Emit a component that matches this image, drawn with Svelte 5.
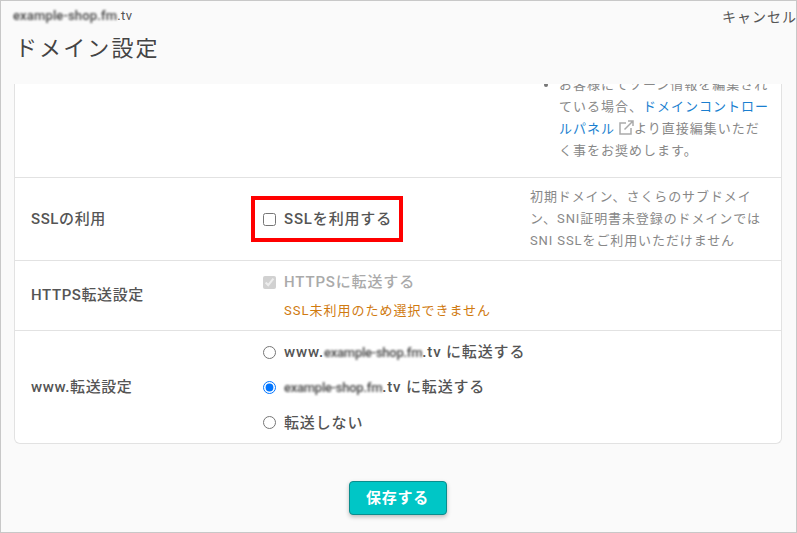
<script>
  let redirect = $state('bare');
  let useSsl = $state(false);
</script>

<div class="modal">
  <header class="modal-header">
    <div class="top-line">
      <span class="domain"><span class="masked">example-shop.fm</span>.tv</span>
      <button class="cancel">キャンセル</button>
    </div>
    <h1>ドメイン設定</h1>
  </header>

  <div class="content">
    <div class="card">
      <div class="row clipped">
        <ul class="note">
          <li>
            お客様にてゾーン情報を編集されている場合、<a href="#top">ドメインコントロールパネル</a><svg class="ext" viewBox="0 0 16 16" width="16" height="16" fill="none" stroke="#aaa" stroke-width="1.5"><path d="M8 3H2v11h11V8" /><path d="M6.5 9.5 14.5 1.5M10 1h5v5" /></svg>より直接編集いただく事をお奨めします。
          </li>
        </ul>
      </div>

      <div class="row ssl">
        <div class="label">SSLの利用</div>
        <div class="control">
          <label class="option highlight">
            <input type="checkbox" bind:checked={useSsl} />
            <span>SSLを利用する</span>
          </label>
        </div>
        <div class="side-note">初期ドメイン、さくらのサブドメイン、SNI証明書未登録のドメインではSNI SSLをご利用いただけません</div>
      </div>

      <div class="row https">
        <div class="label">HTTPS転送設定</div>
        <div class="control stack">
          <label class="option disabled">
            <input type="checkbox" checked disabled />
            <span>HTTPSに転送する</span>
          </label>
          <p class="warn">SSL未利用のため選択できません</p>
        </div>
      </div>

      <div class="row www">
        <div class="label">www.転送設定</div>
        <div class="control radios">
          <label class="option">
            <input type="radio" name="redirect" value="www" bind:group={redirect} />
            <span>www.<span class="masked">example-shop.fm</span>.tv に転送する</span>
          </label>
          <label class="option">
            <input type="radio" name="redirect" value="bare" bind:group={redirect} />
            <span><span class="masked">example-shop.fm</span>.tv に転送する</span>
          </label>
          <label class="option">
            <input type="radio" name="redirect" value="none" bind:group={redirect} />
            <span>転送しない</span>
          </label>
        </div>
      </div>
    </div>

    <div class="actions">
      <button class="save">保存する</button>
    </div>
  </div>
</div>

<style>
  :global(body) {
    margin: 0;
    background: #fafafa;
  }

  .modal {
    box-sizing: border-box;
    width: 797px;
    height: 533px;
    display: flex;
    flex-direction: column;
    overflow: hidden;
    border: 1px solid #c8c8c8;
    background: #fafafa;
    color: #444;
    font-family: Roboto, "Noto Sans CJK JP", sans-serif;
  }

  .modal-header {
    height: 83px;
    flex: none;
    box-sizing: border-box;
    padding: 6px 0 0 12px;
  }

  .top-line {
    display: flex;
    justify-content: space-between;
    align-items: center;
    height: 18px;
  }

  .domain {
    margin-bottom: 2px;
    font-size: 13px;
    color: #555;
    letter-spacing: 0.4px;
  }

  .masked {
    filter: blur(0.8px);
    display: inline-block;
    letter-spacing: 0.15px;
    font-size: 13px;
    font-weight: 500;
    color: #444;
  }

  .cancel {
    width: 74px;
    flex: none;
    padding: 0;
    border: 0;
    background: none;
    color: #555;
    font: inherit;
    font-size: 14px;
    letter-spacing: 1px;
    text-align: left;
    white-space: nowrap;
    overflow: hidden;
  }

  h1 {
    margin: 8px 0 0 2px;
    font-size: 22px;
    font-weight: 400;
    line-height: 32px;
    letter-spacing: 2.1px;
    color: #444;
  }

  .content {
    flex: 1;
    min-height: 0;
    padding: 0 14px 0 13px;
    display: flex;
    flex-direction: column;
  }

  .card {
    background: #fff;
    border: 1px solid #e2e2e2;
    border-top: 0;
    border-radius: 0 0 6px 6px;
  }

  .row {
    display: grid;
    grid-template-columns: 220px 279px 1fr;
    align-items: center;
    padding-left: 16px;
    border-bottom: 1px solid #e2e2e2;
  }

  .row:last-child {
    border-bottom: 0;
  }

  .clipped {
    height: 94px;
    box-sizing: border-box;
    display: flex;
    justify-content: flex-end;
    align-items: flex-end;
    overflow: hidden;
    padding: 0 9px 15px 0;
  }

  .note {
    width: 213px;
    margin: 0;
    padding: 0 0 0 16px;
    list-style: none;
    font-size: 13px;
    line-height: 22px;
    letter-spacing: 1px;
    color: #888;
  }

  .note li {
    position: relative;
  }

  .note li::before {
    content: "";
    position: absolute;
    left: -15px;
    top: 9px;
    width: 4px;
    height: 4px;
    border-radius: 50%;
    background: #777;
  }

  .note a {
    color: #1a7fd0;
    text-decoration: none;
  }

  .ext {
    margin-left: 3px;
    vertical-align: -3px;
  }

  .ssl {
    height: 83px;
    box-sizing: border-box;
  }

  .https {
    height: 70px;
    box-sizing: border-box;
  }

  .www {
    height: 112px;
    box-sizing: border-box;
  }

  .label {
    padding-bottom: 4px;
    font-size: 15px;
    font-weight: 500;
    color: #555;
    letter-spacing: 0.6px;
  }

  .option {
    display: flex;
    align-items: center;
    gap: 8px;
    padding-left: 12px;
    font-size: 15px;
    font-weight: 500;
    line-height: 22px;
    letter-spacing: 0.85px;
    color: #555;
    white-space: nowrap;
  }

  .option .masked {
    letter-spacing: -0.25px;
  }

  .option input {
    width: 13px;
    height: 13px;
    margin: 0;
    flex: none;
  }

  .highlight {
    width: 152px;
    height: 46px;
    box-sizing: border-box;
    padding-left: 8px;
    border: 4px solid #f00;
  }

  .disabled {
    color: #aaa;
  }

  .stack {
    display: flex;
    flex-direction: column;
    gap: 7px;
    padding-top: 2px;
  }

  .warn {
    margin: 0;
    padding-left: 33px;
    font-size: 13px;
    line-height: 22px;
    letter-spacing: 1px;
    color: #d07a10;
  }

  .radios {
    display: flex;
    flex-direction: column;
    gap: 12.5px;
  }

  .side-note {
    font-size: 13px;
    line-height: 22px;
    letter-spacing: 0.9px;
    color: #888;
    padding-right: 14px;
  }

  .actions {
    display: flex;
    justify-content: center;
    padding-top: 37px;
    padding-right: 1px;
  }

  .save {
    width: 98px;
    height: 34px;
    padding: 0 0 3px;
    border: 1px solid #0a8d8d;
    border-radius: 4px;
    background: #00c6c6;
    color: #fff;
    font: inherit;
    font-size: 15px;
    font-weight: 700;
    letter-spacing: 0.7px;
    box-shadow: 0 2px 4px rgba(0, 0, 0, 0.25);
  }
</style>
